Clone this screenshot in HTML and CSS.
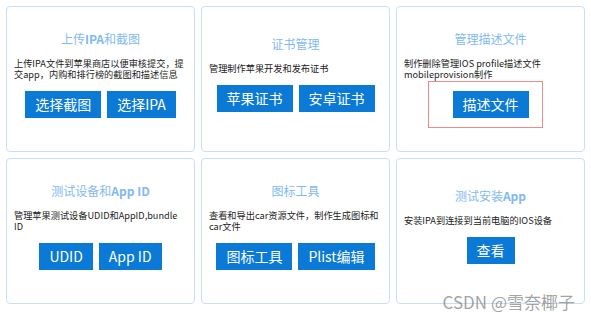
FILE: index.html
```html
<!DOCTYPE html>
<html lang="zh-CN">
<head>
    <meta charset="UTF-8">
    <meta name="viewport" content="width=device-width, initial-scale=1.0">
    <title>iOS 工具箱</title>
    <link rel="stylesheet" href="styles.css">
</head>
<body>
    <div class="grid">
        <div class="card">
            <h2>上传<b>IPA</b>和截图</h2>
            <p>上传IPA文件到苹果商店以便审核提交，提交app，内购和排行榜的截图和描述信息</p>
            <div class="actions">
                <a href="#" class="btn">选择截图</a>
                <a href="#" class="btn">选择IPA</a>
            </div>
        </div>

        <div class="card">
            <h2>证书管理</h2>
            <p>管理制作苹果开发和发布证书</p>
            <div class="actions">
                <a href="#" class="btn">苹果证书</a>
                <a href="#" class="btn">安卓证书</a>
            </div>
        </div>

        <div class="card">
            <h2>管理描述文件</h2>
            <p>制作删除管理IOS profile描述文件 mobileprovision制作</p>
            <div class="actions">
                <span class="marked">
                    <a href="#" class="btn">描述文件</a>
                    <span class="highlight"></span>
                </span>
            </div>
        </div>

        <div class="card">
            <h2>测试设备和<b>App ID</b></h2>
            <p>管理苹果测试设备UDID和AppID,bundle ID</p>
            <div class="actions">
                <a href="#" class="btn">UDID</a>
                <a href="#" class="btn">App ID</a>
            </div>
        </div>

        <div class="card">
            <h2>图标工具</h2>
            <p>查看和导出car资源文件，制作生成图标和car文件</p>
            <div class="actions">
                <a href="#" class="btn">图标工具</a>
                <a href="#" class="btn">Plist编辑</a>
            </div>
        </div>

        <div class="card">
            <h2>测试安装<b>App</b></h2>
            <p>安装IPA到连接到当前电脑的IOS设备</p>
            <div class="actions">
                <a href="#" class="btn">查看</a>
            </div>
        </div>
    </div>

    <div class="watermark">CSDN @雪奈椰子</div>
</body>
</html>
```

FILE: styles.css
```css
:root {
    --blue: #0a7ad6;
    --title: #7fbaf0;
    --line: #c6e0fa;
    --mark: #f08a8a;
}
body {
    font-family: "Noto Sans CJK SC", "Noto Sans", sans-serif;
    margin: 0;
    padding: 0;
    background: white;
    color: #222;
}
.grid {
    display: grid;
    grid-template-columns: repeat(3, 1fr);
    grid-template-rows: 146px 146px;
    gap: 6px;
    padding: 6px;
}
.card {
    display: flex;
    flex-direction: column;
    justify-content: center;
    border: 1.5px solid var(--line);
    border-radius: 4px;
    padding: 0 7px;
}
.card h2 {
    margin: 0 0 11px;
    font-size: 12px;
    line-height: 16px;
    font-weight: normal;
    color: var(--title);
    text-align: center;
}
.card h2 b {
    font-weight: bold;
}
.card p {
    margin: 0;
    font-size: 9.2px;
    line-height: 11.5px;
}
.actions {
    display: flex;
    justify-content: center;
    gap: 6px;
    padding: 10px 0;
}
.btn {
    display: inline-block;
    height: 27px;
    line-height: 27px;
    padding: 0 10px;
    background: var(--blue);
    color: white;
    font-size: 14px;
    text-decoration: none;
}
.marked {
    position: relative;
}
.highlight {
    position: absolute;
    left: -25px;
    right: -14px;
    top: -10px;
    bottom: -10px;
    border: 1px solid var(--mark);
}
.watermark {
    position: absolute;
    right: 16px;
    top: 289px;
    font-size: 17px;
    color: rgba(110, 110, 110, 0.65);
}
```
